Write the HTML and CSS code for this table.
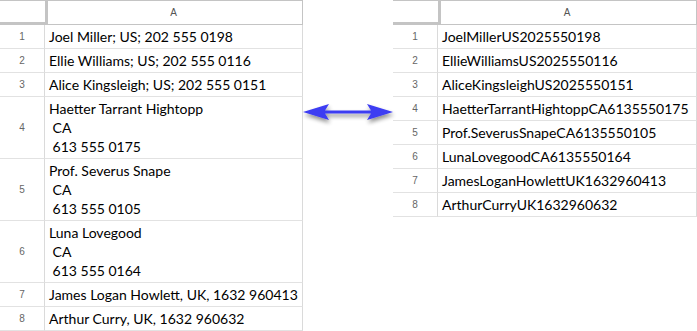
FILE: index.html
```html
<!DOCTYPE html>
<html>
<head>
<meta charset="utf-8">
<link rel="stylesheet" href="styles.css">
</head>
<body>
<div class="page">
  <div class="sheet left">
    <div class="corner"></div><div class="colhead">A</div>
    <div class="rowhead">1</div><div class="cell">Joel Miller; US; 202 555 0198</div>
    <div class="rowhead">2</div><div class="cell">Ellie Williams; US; 202 555 0116</div>
    <div class="rowhead">3</div><div class="cell">Alice Kingsleigh; US; 202 555 0151</div>
    <div class="rowhead">4</div><div class="cell">Haetter Tarrant Hightopp<br>&nbsp;CA<br>&nbsp;613 555 0175</div>
    <div class="rowhead">5</div><div class="cell">Prof. Severus Snape<br>&nbsp;CA<br>&nbsp;613 555 0105</div>
    <div class="rowhead">6</div><div class="cell">Luna Lovegood<br>&nbsp;CA<br>&nbsp;613 555 0164</div>
    <div class="rowhead">7</div><div class="cell">James Logan Howlett, UK, 1632 960413</div>
    <div class="rowhead">8</div><div class="cell">Arthur Curry, UK, 1632 960632</div>
  </div>
  <div class="arrow">
    <svg width="94" height="30" viewBox="0 0 94 30">
      <defs>
        <filter id="sh" x="-20%" y="-50%" width="140%" height="200%">
          <feGaussianBlur in="SourceAlpha" stdDeviation="2"/>
          <feOffset dx="1" dy="3" result="b"/>
          <feComponentTransfer><feFuncA type="linear" slope="0.45"/></feComponentTransfer>
          <feMerge><feMergeNode/><feMergeNode in="SourceGraphic"/></feMerge>
        </filter>
      </defs>
      <polygon filter="url(#sh)" fill="#3c3cf2" points="0,12 26,4 22,10.5 68,10.5 64,4 90,12 64,20 68,13.5 22,13.5 26,20"/>
    </svg>
  </div>
  <div class="sheet right">
    <div class="corner"></div><div class="colhead">A</div>
    <div class="rowhead">1</div><div class="cell">JoelMillerUS2025550198</div>
    <div class="rowhead">2</div><div class="cell">EllieWilliamsUS2025550116</div>
    <div class="rowhead">3</div><div class="cell">AliceKingsleighUS2025550151</div>
    <div class="rowhead">4</div><div class="cell">HaetterTarrantHightoppCA6135550175</div>
    <div class="rowhead">5</div><div class="cell">Prof.SeverusSnapeCA6135550105</div>
    <div class="rowhead">6</div><div class="cell">LunaLovegoodCA6135550164</div>
    <div class="rowhead">7</div><div class="cell">JamesLoganHowlettUK1632960413</div>
    <div class="rowhead">8</div><div class="cell">ArthurCurryUK1632960632</div>
  </div>
</div>
</body>
</html>
```
FILE: styles.css
```css
html, body {
  margin: 0;
  padding: 0;
  background: #ffffff;
}
.page {
  display: flex;
  align-items: flex-start;
  width: 697px;
}
.sheet {
  display: grid;
  grid-template-columns: 45px 258px;
  border-top: 1px solid #c4c4c4;
}
.sheet.right {
  grid-template-columns: 45px 259px;
}
.corner {
  height: 21px;
  border-right: 3px solid #c4c4c4;
  border-bottom: 3px solid #c4c4c4;
  box-sizing: content-box;
  margin-right: -3px;
  position: relative;
  z-index: 1;
}
.colhead {
  height: 23px;
  border-right: 1px solid #c4c4c4;
  border-bottom: 1px solid #c4c4c4;
  font-family: "Liberation Sans", Arial, sans-serif;
  font-size: 10px;
  color: #555;
  display: flex;
  align-items: center;
  justify-content: center;
}
.rowhead {
  border-right: 1px solid #dadada;
  border-bottom: 1px solid #e2e2e2;
  font-family: "Liberation Sans", Arial, sans-serif;
  font-size: 10px;
  color: #666;
  display: flex;
  align-items: center;
  justify-content: center;
}
.cell {
  border-right: 1px solid #dadada;
  border-bottom: 1px solid #e2e2e2;
  padding: 2px 4px 2px 4px;
  font-family: Lato, sans-serif;
  font-size: 14px;
  line-height: 19px;
  color: #000;
  white-space: nowrap;
  overflow: hidden;
}
.arrow {
  width: 90px;
  margin-top: 100px;
  flex: none;
}
.arrow svg {
  display: block;
}
```
